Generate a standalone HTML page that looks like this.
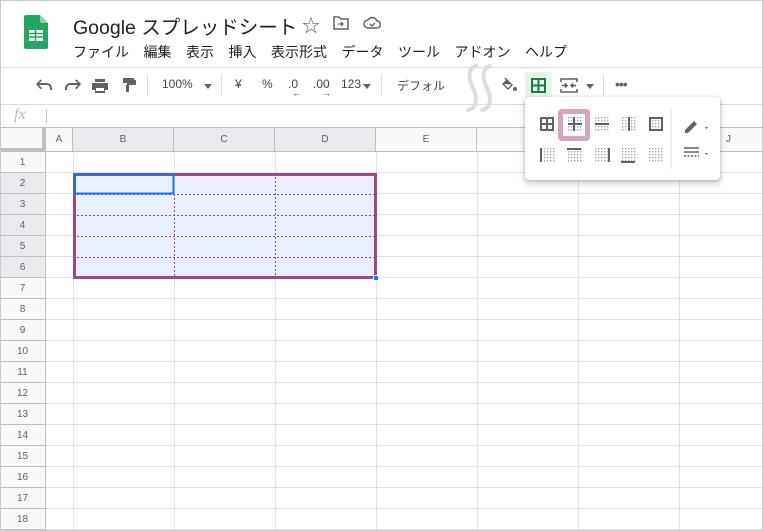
<!DOCTYPE html>
<html><head><meta charset="utf-8"><style>
*{margin:0;padding:0;box-sizing:border-box}
body{width:763px;height:531px;overflow:hidden;background:#fff;font-family:"Liberation Sans","Noto Sans CJK JP",sans-serif;position:relative;color:#3c4043}
.a{position:absolute}
.hl{position:absolute;height:1px;background:#dadce0}
.vl{position:absolute;width:1px;background:#e2e2e2}
.ch{position:absolute;top:128px;height:24px;font-size:10px;color:#5f6368;text-align:center;line-height:24px;border-right:1px solid #c0c0c0;border-bottom:1px solid #c0c0c0}
.rh{position:absolute;left:0;width:46px;height:21px;font-size:10px;color:#5f6368;text-align:center;line-height:21px;border-bottom:1px solid #c0c0c0;border-right:1px solid #c0c0c0;background:#f8f9fa}
.menu span{margin-right:14.5px}
.tb{position:absolute;top:77px;font-size:12px;color:#444}
.sep{position:absolute;top:74px;width:1px;height:22px;background:#dadce0}
</style></head><body>
<svg class="a" style="left:24px;top:15px" width="24" height="34" viewBox="0 0 24 34">
<path d="M2 0h14l8 8v24a2 2 0 0 1-2 2H2a2 2 0 0 1-2-2V2a2 2 0 0 1 2-2z" fill="#23a566"/>
<path d="M16 0l8 8h-6a2 2 0 0 1-2-2z" fill="#8ed1b1"/>
<rect x="5" y="15" width="14" height="11" fill="#fff"/>
<path d="M5 18.5h14M5 22h14M11.5 15v11" stroke="#23a566" stroke-width="1.5"/>
</svg>
<div class="a" style="left:73px;top:11px;font-size:19.5px;color:#202124">Google スプレッドシート</div>
<div class="a" style="left:302px;top:12px;font-size:18px;color:#5f6368">☆</div>
<svg class="a" style="left:333px;top:16px" width="16" height="14"><path d="M1 1h5l2 2h7v10H1z" fill="none" stroke="#5f6368" stroke-width="1.5"/><path d="M5 8h5M8 6l2 2-2 2" stroke="#5f6368" fill="none" stroke-width="1.3"/></svg>
<svg class="a" style="left:363px;top:16px" width="18" height="14"><path d="M5 12a4 4 0 0 1 0-8 5 5 0 0 1 9 1 3.5 3.5 0 0 1 0 7z" fill="none" stroke="#5f6368" stroke-width="1.5"/><path d="M7 8l2 2 3-3" stroke="#5f6368" fill="none" stroke-width="1.3"/></svg>
<div class="a menu" style="left:73px;top:42px;font-size:14px;color:#202124;white-space:nowrap"><span>ファイル</span><span>編集</span><span>表示</span><span>挿入</span><span>表示形式</span><span>データ</span><span>ツール</span><span>アドオン</span><span>ヘルプ</span></div>
<div class="hl" style="left:0;top:67px;width:763px"></div>
<svg class="a" style="left:35px;top:77px" width="120" height="16" fill="#5f6368">
<path d="M3 6h8a5 5 0 0 1 5 5v2h-2v-2a3 3 0 0 0-3-3H3l3 3-1.4 1.4L0 7l4.6-4.6L6 3.8z" transform="translate(1,0)"/>
<path d="M33 6h-8a5 5 0 0 0-5 5v2h2v-2a3 3 0 0 1 3-3h8l-3 3 1.4 1.4L36 7l-4.6-4.6L30 3.8z" transform="translate(10,0)"/>
<path d="M60 2h10v3h-10zM57 6h16v7h-3v3h-10v-3h-3zM61 11v3h8v-3z"/>
<path d="M88 1h11v5h-11zM99 3h2v5h-7v7h-3v-7h1v-2h7z"/>
</svg>
<div class="sep" style="left:147px"></div>
<div class="tb" style="left:162px">100%</div>
<div class="a" style="left:204px;top:84px;border:4px solid transparent;border-top:5px solid #5f6368"></div>
<div class="sep" style="left:221px"></div>
<div class="tb" style="left:235px">¥</div>
<div class="tb" style="left:262px">%</div>
<div class="tb" style="left:288px">.0</div><div class="a" style="left:292px;top:88px;font-size:9px;color:#444">←</div>
<div class="tb" style="left:313px">.00</div><div class="a" style="left:322px;top:88px;font-size:9px;color:#444">→</div>
<div class="tb" style="left:341px">123</div>
<div class="a" style="left:363px;top:84px;border:4px solid transparent;border-top:5px solid #5f6368"></div>
<div class="sep" style="left:381px"></div>
<div class="tb" style="left:397px">デフォル</div>
<svg class="a" style="left:462px;top:62px" width="36" height="52" fill="none" stroke="#ddd" stroke-width="4" stroke-linecap="round"><path d="M14 4c-8 2-8 12-3 22s4 20-5 22M28 4c-8 2-8 12-3 22s4 20-5 22"/></svg>
<svg class="a" style="left:500px;top:77px" width="18" height="16" fill="#5f6368"><path d="M6 1l7 7-5 5-6-6 4-4-2-2zM4 7l4 4 3.5-3.5z"/><circle cx="15" cy="12" r="2"/></svg>
<div class="a" style="left:525px;top:72px;width:27px;height:26px;background:#e6f4ea;border-radius:2px"></div>
<svg class="a" style="left:531px;top:78px" width="15" height="15"><path d="M1 1h13v13H1zM7.5 1v13M1 7.5h13" fill="none" stroke="#188038" stroke-width="2"/></svg>
<svg class="a" style="left:560px;top:78px" width="18" height="15" fill="none" stroke="#5f6368" stroke-width="1.6"><path d="M1 4V1h16v3M1 11v3h16v-3M2 7.5h5M11 7.5h5M5 5.5l2 2-2 2M13 5.5l-2 2 2 2"/></svg>
<div class="a" style="left:586px;top:84px;border:4px solid transparent;border-top:5px solid #5f6368"></div>
<div class="sep" style="left:603px"></div>
<div class="a" style="left:615px;top:76px;font-size:14px;color:#5f6368;letter-spacing:-1px">•••</div>
<div class="hl" style="left:0;top:104px;width:763px"></div>
<div class="a" style="left:14px;top:106px;font-size:16px;color:#bbb;font-style:italic;font-family:'Liberation Serif',serif">fx</div>
<div class="a" style="left:46px;top:109px;width:1px;height:15px;background:#ccc"></div>
<div class="hl" style="left:0;top:127px;width:763px;background:#c0c0c0"></div>
<div class="ch" style="left:0;width:46px;background:#f8f9fa;border-right:4px solid #c0c0c0;border-bottom:4px solid #c0c0c0"></div>
<div class="ch" style="left:46px;width:27px;background:#f8f9fa">A</div>
<div class="ch" style="left:73px;width:101px;background:#e8eaed">B</div>
<div class="ch" style="left:174px;width:101px;background:#e8eaed">C</div>
<div class="ch" style="left:275px;width:101px;background:#e8eaed">D</div>
<div class="ch" style="left:376px;width:101px;background:#f8f9fa">E</div>
<div class="ch" style="left:477px;width:101px;background:#f8f9fa"></div>
<div class="ch" style="left:578px;width:101px;background:#f8f9fa"></div>
<div class="ch" style="left:679px;width:84px;background:#f8f9fa;border-right:none"></div>
<div class="a" style="left:726px;top:134px;font-size:10px;color:#5f6368">J</div>
<div class="a" style="left:46px;top:152px;width:717px;height:379px;background:repeating-linear-gradient(to bottom,transparent 0 20px,#e2e2e2 20px 21px)"></div>
<div class="vl" style="left:73px;top:152px;height:379px"></div>
<div class="vl" style="left:174px;top:152px;height:379px"></div>
<div class="vl" style="left:275px;top:152px;height:379px"></div>
<div class="vl" style="left:376px;top:152px;height:379px"></div>
<div class="vl" style="left:477px;top:152px;height:379px"></div>
<div class="vl" style="left:578px;top:152px;height:379px"></div>
<div class="vl" style="left:679px;top:152px;height:379px"></div>
<div class="rh" style="top:152px">1</div>
<div class="rh" style="top:173px;background:#e8eaed">2</div>
<div class="rh" style="top:194px;background:#e8eaed">3</div>
<div class="rh" style="top:215px;background:#e8eaed">4</div>
<div class="rh" style="top:236px;background:#e8eaed">5</div>
<div class="rh" style="top:257px;background:#e8eaed">6</div>
<div class="rh" style="top:278px">7</div>
<div class="rh" style="top:299px">8</div>
<div class="rh" style="top:320px">9</div>
<div class="rh" style="top:341px">10</div>
<div class="rh" style="top:362px">11</div>
<div class="rh" style="top:383px">12</div>
<div class="rh" style="top:404px">13</div>
<div class="rh" style="top:425px">14</div>
<div class="rh" style="top:446px">15</div>
<div class="rh" style="top:467px">16</div>
<div class="rh" style="top:488px">17</div>
<div class="rh" style="top:509px">18</div>
<div class="a" style="left:73px;top:173px;width:304px;height:106px;background:#e8f0fd"></div>
<svg class="a" style="left:73px;top:173px" width="305" height="107">
<g stroke="#9c4a7d" stroke-width="1" stroke-dasharray="2 2" fill="none">
<path d="M101.5 21V105M202.5 0V105M0 21.5H303M0 42.5H303M0 63.5H303M0 84.5H303"/>
</g>
<rect x="1.5" y="1.5" width="301" height="103" fill="none" stroke="#9c4a7d" stroke-width="3"/>
<rect x="1.5" y="1.5" width="99" height="19" fill="none" stroke="#1a73e8" stroke-width="2"/>
</svg>
<div class="a" style="left:373px;top:275px;width:6px;height:6px;background:#1a73e8;border:1px solid #fff"></div>
<div class="a" style="left:0;top:0;width:763px;height:531px;border:1px solid #ccc;pointer-events:none"></div>
<div class="a" style="left:525px;top:97px;width:195px;height:83px;background:#fff;border-radius:4px;box-shadow:0 1px 3px rgba(60,64,67,.3),0 3px 6px 2px rgba(60,64,67,.15)"></div>
<div class="a" style="left:558px;top:109px;width:32px;height:32px;background:#d4a5be;border-radius:4px"></div>
<div class="a" style="left:563px;top:114px;width:22px;height:22px;background:#fff"></div>
<svg class="a" style="left:525px;top:97px" width="195" height="83">
<defs>
<g id="d" stroke="#9aa0a6" stroke-width="1.3" stroke-dasharray="1.4 1.6" fill="none"><path d="M0.7 0V14M3.7 0V14M6.7 0V14M9.7 0V14M12.7 0V14"/></g>
</defs>
<g fill="none" stroke="#5f6368" stroke-width="2">
<path d="M16 21h12v12H16zM22 21v12M16 27h12"/>
<g transform="translate(43,20)"><use href="#d"/></g><path d="M49 20v14M43 27h14"/>
<g transform="translate(70,20)"><use href="#d"/></g><path d="M70 27h14" />
<g transform="translate(97,20)"><use href="#d"/></g><path d="M104 20v14"/>
<g transform="translate(124,20)"><use href="#d"/></g><path d="M125 21h12v12h-12z"/>
<g transform="translate(16,51)"><use href="#d"/></g><path d="M16 51v14"/>
<g transform="translate(43,51)"><use href="#d"/></g><path d="M42 52h14"/>
<g transform="translate(70,51)"><use href="#d"/></g><path d="M84 51v14"/>
<g transform="translate(97,51)"><use href="#d"/></g><path d="M96 65h14"/>
<g transform="translate(124,51)"><use href="#d"/></g>
</g>
<path d="M146 12v60" stroke="#e0e0e0"/>
<path d="M160 33l9-9 3 3-9 9h-3z" fill="#5f6368"/>
<path d="M180 30l3 0-1.5 2z" fill="#5f6368"/>
<path d="M159 51h15M159 55h15" stroke="#5f6368" stroke-width="1.5"/><path d="M159 59h15" stroke="#5f6368" stroke-width="1.5" stroke-dasharray="2 1.5"/>
<path d="M180 56h3l-1.5 2z" fill="#5f6368"/>
</svg>
</body></html>
